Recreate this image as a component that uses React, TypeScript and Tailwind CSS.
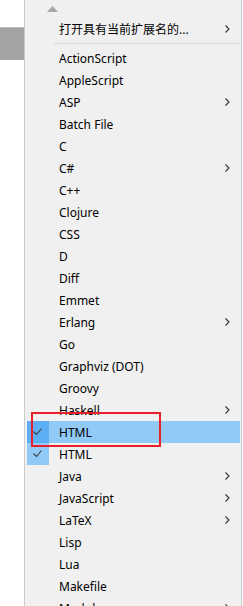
import React from "react";

type Item = { label: string; sub?: boolean; checked?: boolean; hot?: boolean };

const items: Item[] = [
  { label: "ActionScript" },
  { label: "AppleScript" },
  { label: "ASP", sub: true },
  { label: "Batch File" },
  { label: "C" },
  { label: "C#", sub: true },
  { label: "C++" },
  { label: "Clojure" },
  { label: "CSS" },
  { label: "D" },
  { label: "Diff" },
  { label: "Emmet" },
  { label: "Erlang", sub: true },
  { label: "Go" },
  { label: "Graphviz (DOT)" },
  { label: "Groovy" },
  { label: "Haskell", sub: true },
  { label: "HTML", checked: true, hot: true },
  { label: "HTML", checked: true },
  { label: "Java", sub: true },
  { label: "JavaScript", sub: true },
  { label: "LaTeX", sub: true },
  { label: "Lisp" },
  { label: "Lua" },
  { label: "Makefile" },
  { label: "Markdown", sub: true },
];

function Chevron() {
  return (
    <svg width="5" height="8" viewBox="0 0 5 8" className="absolute right-[10px] top-[7px]">
      <path d="M0.5 0.5 L4 4 L0.5 7.5" fill="none" stroke="#333" strokeWidth="1.1" />
    </svg>
  );
}

function Check() {
  return (
    <svg width="10" height="8" viewBox="0 0 10 8">
      <path d="M0.5 3.5 L3.5 6.5 L8.5 0.5" fill="none" stroke="#3c3c3c" strokeWidth="1.1" />
    </svg>
  );
}

function Row({ item }: { item: Item }) {
  return (
    <div
      className={`relative h-[22px] shrink-0 flex items-center ml-[2px] mr-[1px] ${
        item.hot ? "bg-[#91c9f7]" : ""
      }`}
    >
      <div
        className={`w-[22px] h-[22px] flex items-center justify-center ${
          item.checked ? (item.hot ? "bg-[#5eaef5]" : "bg-[#91c9f7]") : ""
        }`}
      >
        {item.checked && <Check />}
      </div>
      <span className="ml-[10px] mt-[2px] text-[12px] leading-[20px] text-black whitespace-nowrap">
        {item.label}
      </span>
      {item.sub && <Chevron />}
    </div>
  );
}

export default function App() {
  return (
    <div
      className="relative w-[243px] h-[606px] bg-white overflow-hidden flex"
      style={{ fontFamily: '"Noto Sans", "Noto Sans CJK SC", sans-serif' }}
    >
      <div className="w-[24px] shrink-0">
        <div className="mt-[27px] h-[33px] bg-[#a3a3a3] border-t border-[#bdbdbd]" />
      </div>
      <div className="w-[218px] shrink-0 border-x border-[#cccccc] bg-[#f0f0f0] flex flex-col">
        <div className="h-[18px] shrink-0 pl-[22px] pt-[6px]">
          <svg width="11" height="6" viewBox="0 0 11 6" className="block">
            <polygon points="0,6 5.5,0 11,6" fill="#a8a8a8" />
          </svg>
        </div>
        <Row item={{ label: "打开具有当前扩展名的...", sub: true }} />
        <div className="h-[7px] shrink-0 flex items-center">
          <div className="ml-[29px] mr-[1px] flex-1 h-px bg-[#d7d7d7]" />
        </div>
        {items.map((it, i) => (
          <Row key={i} item={it} />
        ))}
      </div>
      <div className="absolute left-[31px] top-[412px] w-[130px] h-[35px] border-2 border-[#e8202a]" />
    </div>
  );
}
